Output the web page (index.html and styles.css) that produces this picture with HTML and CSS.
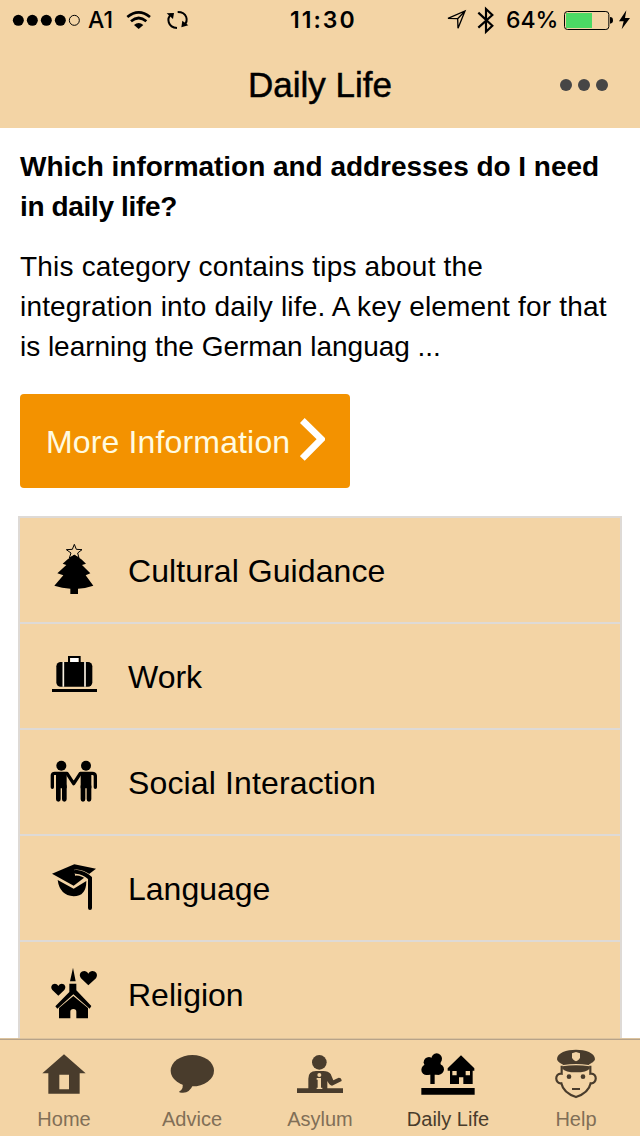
FILE: index.html
```
<!DOCTYPE html>
<html lang="en">
<head>
<meta charset="utf-8">
<title>Daily Life</title>
<link rel="stylesheet" href="styles.css">
</head>
<body>
<div class="screen">
  <header class="header">
    <div class="status">
      <svg class="signal" viewBox="0 0 252 120"><circle cx="55" cy="61" r="16.5"/><circle cx="97" cy="61" r="16.5"/><circle cx="139" cy="61" r="16.5"/><circle cx="181" cy="61" r="16.5"/><circle cx="223" cy="61" r="15" fill="none" stroke="#000" stroke-width="3"/></svg>
      <span class="carrier">A1</span>
      <svg class="network" viewBox="360 0 240 120"><g fill="none" stroke="#000" stroke-width="8"><path d="M382 51Q416 23 450 51"/><path d="M393 64Q416 44 439 64"/></g><path d="M402 75Q416 63 430 75L416 87Z"/><g fill="none" stroke="#000" stroke-width="6"><path d="M531 84C503 82 499 55 514 43"/><path d="M533 36C562 36 566 63 552 76"/></g><path d="M500 40L522 39L519 57ZM565 76L544 82L547 62Z"/></svg>
      <span class="clock">11:30</span>
      <svg class="radios" viewBox="0 0 210 120"><path d="M54 55L105 33L84 85L83 56Z M83 56L103 35" fill="none" stroke="#000" stroke-width="4"/><path d="M145 38L187 77L168 95V27L187 45L145 83" fill="none" stroke="#000" stroke-width="6.500"/></svg>
      <span class="percent">64%</span>
      <svg class="battery" viewBox="390 0 240 120"><rect x="403.500" y="34.500" width="133" height="54" rx="9" fill="none" stroke="#000" stroke-width="3"/><path d="M408 39H486V84H408Z" fill="#4cd964"/><path d="M540 51Q549 51 549 61T540 71Z"/><path d="M589 31L567 64H581L575 88L600 54H585Z"/></svg>
    </div>
    <div class="titlebar">
      <h1 class="title">Daily Life</h1>
      <div class="more"><i></i><i></i><i></i></div>
    </div>
  </header>
  <main class="content">
    <h2 class="question"><span class="q1">Which information and addresses do I need</span><br><span class="q2">in daily life?</span></h2>
    <p class="intro"><span class="p1">This category contains tips about the</span><br><span class="p2">integration into daily life. A key element for that</span><br><span class="p3">is learning the German languag ...</span></p>
    <a class="button"><span class="button-label">More Information</span><svg class="chevron" viewBox="870 98 75 134"><path d="M877 108L934 164L877 222" fill="none" stroke="#fff" stroke-width="20"/></svg></a>
    <ul class="list">
      <li class="row"><svg class="row-icon" viewBox="0 -36 210 312"><path d="M103 43L109 58L126 59L113 69L117 84L103 76L88 84L93 69L79 59L97 58Z" fill="none" stroke="#000" stroke-width="3"/><path d="M103 74L124 88L138 101L126 105L151 130L137 136L160 167Q137 175 114 176V192H91V176Q66 174 43 167L70 136L52 130L79 105L68 101L83 88Z"/></svg><span class="r1">Cultural Guidance</span></li>
      <li class="row"><svg class="row-icon" viewBox="0 -48 210 312"><path d="M36 147H171V156H36Z"/><rect x="49" y="66" width="108" height="74" rx="13"/><path d="M87 68V51H119V68" fill="none" stroke="#000" stroke-width="6"/><path d="M91 54H115V66H91Z" fill="#fff"/><path d="M70 66V140M135 66V140" stroke="#f7efe0" stroke-width="5"/></svg><span class="r2">Work</span></li>
      <li class="row"><svg class="row-icon" viewBox="0 -60 210 312"><circle cx="64" cy="47" r="15"/><circle cx="138" cy="47" r="15"/><g fill="none" stroke="#000" stroke-linecap="round" stroke-linejoin="round"><path d="M37 112V75Q38 70 44 70H81L101 101L121 70H157Q165 70 166 77V112" stroke-width="10"/><path d="M55 108V148M73 108V148M129 108V148M147 108V148" stroke-width="14"/></g><path d="M48 66H80V115H48ZM122 66H154V115H122Z"/></svg><span class="r3">Social Interaction</span></li>
      <li class="row"><svg class="row-icon" viewBox="0 -57 210 312"><path d="M36 56L103 28L168 41L101 92Z"/><path d="M53 75L101 101L139 78Q139 124 101 124Q59 121 53 75Z"/><path d="M104 53Q124 50 150 69V90" fill="none" stroke="#f3d4a5" stroke-width="18"/><path d="M107 50Q132 52 150 69V159" fill="none" stroke="#000" stroke-width="12" stroke-linecap="round"/></svg><span class="r4">Language</span></li>
      <li class="row"><svg class="row-icon" viewBox="0 -39 210 312"><path d="M99 38L107 79H90ZM88 86H109V106L154 153L149 161L100 118L52 161L46 154L88 111Z"/><path d="M100 123L144 159V190H109V170Q109 162 100 162T91 170V190H57V159Z"/><path d="M145 91L123 70C110 51 137 39 145 56C153 39 180 51 168 70Z"/><path d="M55 122L37 105C26 90 47 78 55 93C63 78 84 90 73 105Z"/></svg><span class="r5">Religion</span></li>
    </ul>
  </main>
  <nav class="tabs">
    <a class="tab"><svg viewBox="0 30 384 186"><path fill-rule="evenodd" d="M192 73L257 130H239V191H145V130H127ZM178 134V178H207V134Z"/></svg><span class="t1">Home</span></a>
    <a class="tab"><svg viewBox="384 30 384 186"><ellipse cx="577" cy="122" rx="65" ry="47"/><path d="M547 157Q553 178 537 185Q538 189 549 188Q570 187 579 164Z"/></svg><span class="t2">Advice</span></a>
    <a class="tab"><svg viewBox="-12 30 384 186"><circle cx="178" cy="97" r="22"/><path d="M111 175H249V189H111Z"/><path d="M145 177V146Q145 123 168 123H190Q205 123 212 132L220 151L236 143Q245 143 245 153L216 167Q209 167 202 153V177Z"/><g fill="#f3d4a5"><circle cx="178" cy="135" r="6"/><path d="M170 144H183V173H187V177H170V173H173V149H170Z"/></g></svg><span class="t3">Asylum</span></a>
    <a class="tab active"><svg viewBox="372 30 384 186"><path d="M484 174H644V194H484Z"/><circle cx="530" cy="86" r="16"/><circle cx="507" cy="97" r="16"/><circle cx="500" cy="119" r="16"/><circle cx="536" cy="118" r="16"/><circle cx="522" cy="103" r="20"/><path d="M498 106H538V134H524V162H511V134H498Z"/><path fill-rule="evenodd" d="M603 76L643 115V122H638V162H610V142H597V162H570V122H563V115ZM577 123V136H590V123ZM617 123V136H630V123Z"/></svg><span class="t4">Daily Life</span></a>
    <a class="tab"><svg viewBox="-24 30 384 186"><path d="M125 107V131C102 128 105 163 124 160C129 184 149 195 168 201C187 195 207 184 212 160C231 163 234 128 211 131V107" fill="none" stroke="#493c2c" stroke-width="6.500"/><path d="M111 88C111 68 140 59 168 59S225 68 225 88C222 98 209 101 206 105Q168 99 130 105C126 101 114 99 111 88Z"/><path d="M127 109Q168 102 209 109V116Q200 127 168 127T127 116Z"/><path d="M156 70L168 66L180 70V82Q179 90 168 94Q157 90 156 82Z" fill="#f3d4a5"/><circle cx="147" cy="140" r="7"/><circle cx="189" cy="140" r="7"/><path d="M156 174H180V180H156Z"/></svg><span class="t5">Help</span></a>
  </nav>
</div>
</body>
</html>
```
FILE: styles.css
```
* { box-sizing: border-box; }
body { margin: 0; font-family: "Liberation Sans", Arial, sans-serif; color: #000; }
svg { display: block; flex: none; }
.screen { width: 640px; height: 1136px; display: flex; flex-direction: column; overflow: hidden; background: #fff; }
.header { height: 128px; flex: none; background: #f3d4a5; }
.status { height: 40px; display: flex; font: 500 23px/41px Inter, sans-serif; white-space: nowrap; }
.signal { width: 84px; height: 40px; }
.carrier { width: 36px; padding-left: 4px; }
.network { width: 80px; height: 40px; }
.clock { width: 230px; padding-left: 90px; font-weight: 600; letter-spacing: 2px; }
.radios { width: 70px; height: 40px; }
.percent { width: 60px; padding-left: 6px; }
.battery { width: 80px; height: 40px; }
.titlebar { height: 88px; display: grid; grid-template-columns: 1fr auto 1fr; }
.title { grid-column: 2; margin: 0; font-size: 35px; font-weight: 400; line-height: 89px; -webkit-text-stroke: 0.5px #000; }
.more { justify-self: end; align-self: center; display: flex; gap: 6px; padding-right: 32px; }
.more i { width: 12px; height: 12px; border-radius: 50%; background: #464646; }
.content { flex: 1; min-height: 0; overflow: hidden; padding: 19px 18px 0; }
.question { margin: 0 2px 20px; font-size: 28px; line-height: 40px; white-space: nowrap; }
.q1 { letter-spacing: -0.03px; }
.q2 { letter-spacing: -0.35px; }
.intro { margin: 0 2px 27px; font-size: 28px; line-height: 40px; white-space: nowrap; }
.p1 { letter-spacing: 0.19px; }
.p2 { letter-spacing: 0.18px; }
.p3 { letter-spacing: -0.03px; }
.button { display: flex; align-items: center; width: 330px; height: 94px; margin: 0 2px 28px; padding-left: 26px; border-radius: 4px; background: #f39200; color: #fffbe0; font-size: 32px; }
.button-label { width: 254px; padding-top: 2px; white-space: nowrap; letter-spacing: 0.15px; }
.chevron { width: 25px; height: 45px; margin-bottom: 4px; }
.list { margin: 0; padding: 0; list-style: none; border: 2px solid #dedad6; background: #f3d4a5; }
.row { height: 106px; display: flex; padding-left: 20px; border-bottom: 2px solid #dedad6; font-size: 32px; line-height: 106px; }
.r1 { letter-spacing: 0.07px; }
.r3 { letter-spacing: 0.14px; }
.row-icon { width: 70px; height: 104px; margin-right: 18px; }
.tabs { height: 98px; flex: none; display: grid; grid-template-columns: repeat(5, 128px); background: #f3d4a5; border-top: 1px solid #dcc39d; box-shadow: inset 0 1px #b7a389; }
.tab { display: flex; flex-direction: column; align-items: center; padding-top: 1px; color: #816f57; fill: #493c2c; font-size: 20px; line-height: 35px; }
.tab svg { width: 128px; height: 62px; }
.tab.active { color: #493c2c; fill: #000; }
```
